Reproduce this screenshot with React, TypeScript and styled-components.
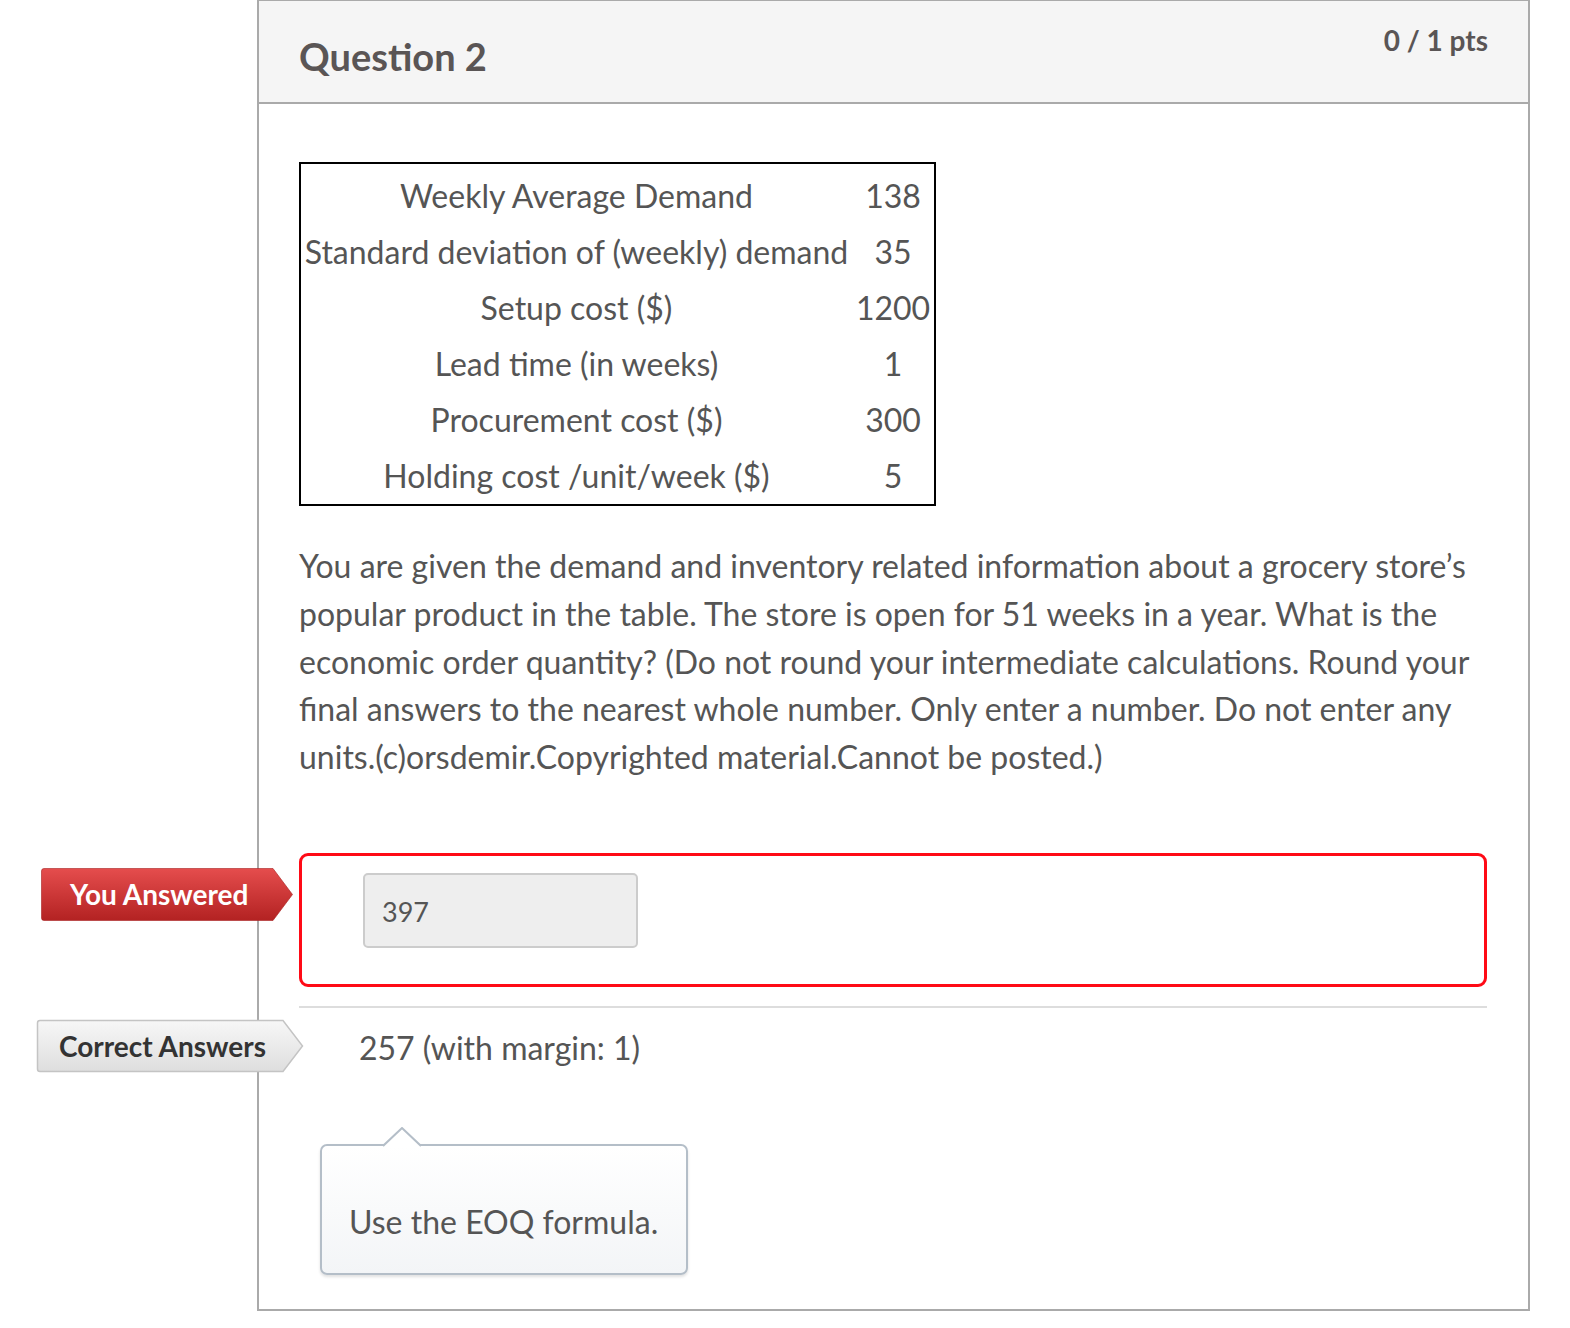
import React from "react";
import styled, { createGlobalStyle } from "styled-components";

const Global = createGlobalStyle`
  html, body { margin: 0; padding: 0; background: #fff; }
  body { font-family: Lato, "Open Sans", "Liberation Sans", sans-serif; color: #555; }
`;

const Page = styled.div`
  padding-left: 257px;
  width: 1273px;
`;

const Card = styled.section`
  border: 2px solid #aaa;
  border-top-width: 1px;
  background: #fff;
`;

const Header = styled.header`
  height: 101px;
  background: #f5f5f5;
  border-bottom: 2px solid #aaa;
  display: flex;
  justify-content: space-between;
  align-items: flex-start;
  padding: 0 40px;
`;

const Title = styled.h2`
  margin: 0;
  padding-top: 31px;
  font-size: 38px;
  line-height: 48px;
  font-weight: 700;
  color: #5a5555;
`;

const Points = styled.div`
  padding-top: 21px;
  font-size: 28px;
  line-height: 36px;
  font-weight: 700;
  color: #5a5555;
`;

const Body = styled.div`
  padding: 58px 41px 34px 40px;
`;

const DataTable = styled.table`
  border-collapse: separate;
  border-spacing: 0;
  border: 2px solid #000;
  padding: 4px 0 0;
  width: 637px;
`;

const Cell = styled.td<{ $w: number }>`
  width: ${(p) => p.$w}px;
  height: 56px;
  padding: 0;
  text-align: center;
  font-size: 32px;
  line-height: 38px;
  color: #555;
  white-space: nowrap;
`;

const Prompt = styled.p`
  margin: 36px 0 0;
  font-size: 32px;
  line-height: 47.8px;
  color: #555;
`;

const AnswerRow = styled.div<{ $top: number }>`
  position: relative;
  margin-top: ${(p) => p.$top}px;
`;

const RibbonWrap = styled.div<{ $left: number; $top: number; $w: number; $h: number }>`
  position: absolute;
  left: ${(p) => p.$left}px;
  top: ${(p) => p.$top}px;
  width: ${(p) => p.$w}px;
  height: ${(p) => p.$h}px;
  display: flex;
  align-items: center;
`;

const RibbonShape = styled.svg`
  position: absolute;
  inset: 0;
  width: 100%;
  height: 100%;
  overflow: visible;
`;

const RibbonText = styled.span<{ $pad: number; $color: string }>`
  position: relative;
  padding-left: ${(p) => p.$pad}px;
  font-size: 28px;
  font-weight: 700;
  color: ${(p) => p.$color};
  white-space: nowrap;
`;

const WrongBox = styled.div`
  border: 3px solid #ff0a16;
  border-radius: 9px;
  box-sizing: content-box;
  height: 111px;
  padding: 17px 0 0 61px;
`;

const AnswerInput = styled.div`
  width: 275px;
  height: 75px;
  box-sizing: border-box;
  background: #eee;
  border: 2px solid #ccc;
  border-radius: 5px;
  padding: 3px 0 0 17px;
  display: flex;
  align-items: center;
  font-size: 27px;
  color: #555;
`;

const Divider = styled.hr`
  margin: 19px 0 0;
  border: 0;
  border-top: 2px solid #ddd;
`;

const CorrectText = styled.div`
  padding-left: 60px;
  height: 79px;
  display: flex;
  align-items: center;
  font-size: 32px;
  color: #555;
`;

const Hint = styled.div`
  position: relative;
  margin: 57px 0 0 21px;
  width: 368px;
  height: 131px;
  box-sizing: border-box;
  border: 2px solid #b4bec8;
  border-radius: 7px;
  background: linear-gradient(#ffffff, #f3f5f7);
  box-shadow: 0 2px 3px rgba(0, 0, 0, 0.12);
  display: flex;
  align-items: center;
  padding: 24px 0 0 27px;
  font-size: 32px;
  color: #555;
`;

const HintArrow = styled.svg`
  position: absolute;
  left: 61px;
  top: -19px;
  width: 38px;
  height: 20px;
`;

type RibbonProps = {
  kind: "wrong" | "right";
  children: React.ReactNode;
};

function Ribbon({ kind, children }: RibbonProps) {
  const wrong = kind === "wrong";
  const w = wrong ? 252 : 266;
  const h = wrong ? 53 : 52;
  const body = wrong ? 232 : 246;
  const id = wrong ? "gw" : "gr";
  return (
    <RibbonWrap $left={wrong ? -258 : -262} $top={wrong ? 15 : 12} $w={w} $h={h}>
      <RibbonShape viewBox={`0 0 ${w} ${h}`} preserveAspectRatio="none">
        <defs>
          <linearGradient id={id} x1="0" y1="0" x2="0" y2="1">
            {wrong ? (
              <>
                <stop offset="0" stopColor="#e54d4d" />
                <stop offset="1" stopColor="#b32222" />
              </>
            ) : (
              <>
                <stop offset="0" stopColor="#f7f7f7" />
                <stop offset="1" stopColor="#dedede" />
              </>
            )}
          </linearGradient>
        </defs>
        <path
          d={`M3 0.5 H${body} L${w - 0.5} ${h / 2} L${body} ${h - 0.5} H3 Q0.5 ${h - 0.5} 0.5 ${h - 3} V3 Q0.5 0.5 3 0.5 Z`}
          fill={`url(#${id})`}
          stroke={wrong ? "#a82020" : "#c4c4c4"}
          strokeWidth={wrong ? 0.6 : 1.5}
        />
      </RibbonShape>
      <RibbonText $pad={wrong ? 29 : 22} $color={wrong ? "#fff" : "#333"}>
        {children}
      </RibbonText>
    </RibbonWrap>
  );
}

const rows: [string, string][] = [
  ["Weekly Average Demand", "138"],
  ["Standard deviation of (weekly) demand", "35"],
  ["Setup cost ($)", "1200"],
  ["Lead time (in weeks)", "1"],
  ["Procurement cost ($)", "300"],
  ["Holding cost /unit/week ($)", "5"],
];

export default function App() {
  return (
    <>
      <Global />
      <Page>
        <Card>
          <Header>
            <Title>Question 2</Title>
            <Points>0 / 1 pts</Points>
          </Header>
          <Body>
            <DataTable>
              <tbody>
                {rows.map(([label, value]) => (
                  <tr key={label}>
                    <Cell $w={551}>{label}</Cell>
                    <Cell $w={82}>{value}</Cell>
                  </tr>
                ))}
              </tbody>
            </DataTable>
            <Prompt>
              You are given the demand and inventory related information about a grocery store’s
              popular product in the table. The store is open for 51 weeks in a year. What is the
              economic order quantity? (Do not round your intermediate calculations. Round your
              final answers to the nearest whole number. Only enter a number. Do not enter any
              units.(c)orsdemir.Copyrighted material.Cannot be posted.)
            </Prompt>
            <AnswerRow $top={72}>
              <Ribbon kind="wrong">You Answered</Ribbon>
              <WrongBox>
                <AnswerInput>397</AnswerInput>
              </WrongBox>
            </AnswerRow>
            <Divider />
            <AnswerRow $top={0}>
              <Ribbon kind="right">Correct Answers</Ribbon>
              <CorrectText>257 (with margin: 1)</CorrectText>
            </AnswerRow>
            <Hint>
              <HintArrow viewBox="0 0 38 20">
                <path d="M0 19 L19 1 L38 19" fill="#fff" stroke="#b4bec8" strokeWidth="2" />
              </HintArrow>
              Use the EOQ formula.
            </Hint>
          </Body>
        </Card>
      </Page>
    </>
  );
}
